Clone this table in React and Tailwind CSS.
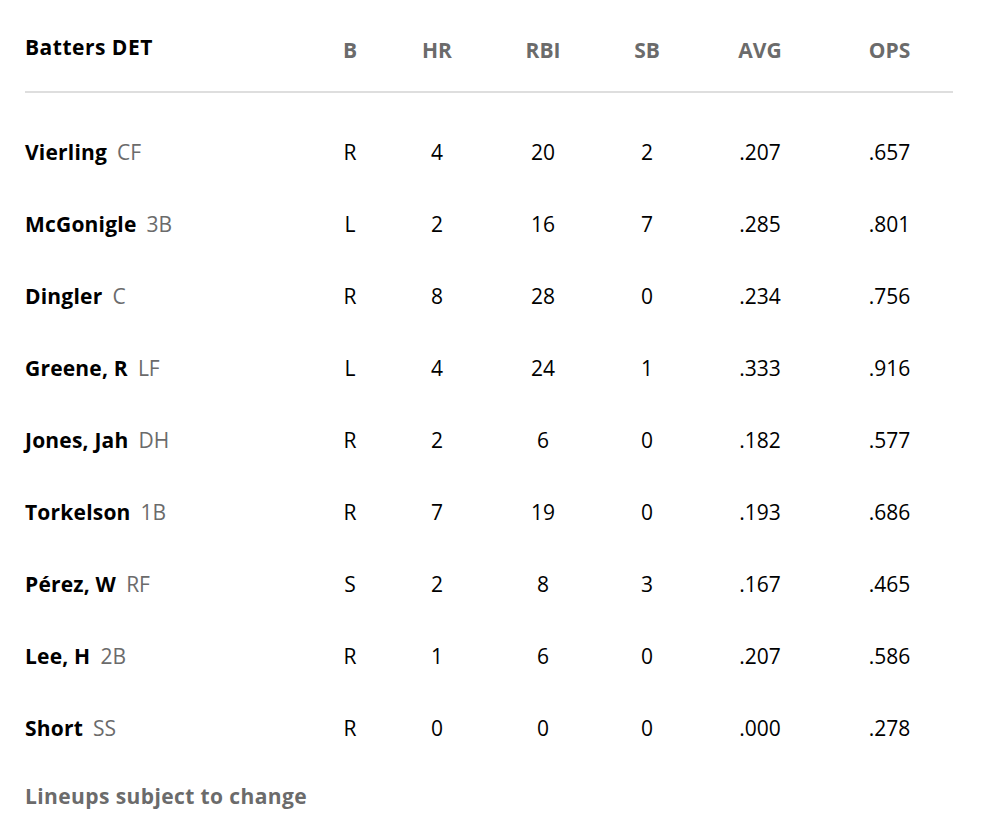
const batters = [
  { name: "Vierling", pos: "CF", b: "R", hr: 4, rbi: 20, sb: 2, avg: ".207", ops: ".657" },
  { name: "McGonigle", pos: "3B", b: "L", hr: 2, rbi: 16, sb: 7, avg: ".285", ops: ".801" },
  { name: "Dingler", pos: "C", b: "R", hr: 8, rbi: 28, sb: 0, avg: ".234", ops: ".756" },
  { name: "Greene, R", pos: "LF", b: "L", hr: 4, rbi: 24, sb: 1, avg: ".333", ops: ".916" },
  { name: "Jones, Jah", pos: "DH", b: "R", hr: 2, rbi: 6, sb: 0, avg: ".182", ops: ".577" },
  { name: "Torkelson", pos: "1B", b: "R", hr: 7, rbi: 19, sb: 0, avg: ".193", ops: ".686" },
  { name: "Pérez, W", pos: "RF", b: "S", hr: 2, rbi: 8, sb: 3, avg: ".167", ops: ".465" },
  { name: "Lee, H", pos: "2B", b: "R", hr: 1, rbi: 6, sb: 0, avg: ".207", ops: ".586" },
  { name: "Short", pos: "SS", b: "R", hr: 0, rbi: 0, sb: 0, avg: ".000", ops: ".278" },
];

const cols = "grid grid-cols-[285px_80px_94px_118px_90px_136px_123px]";

export default function App() {
  return (
    <div className="min-h-screen bg-white px-[25px] font-['Open_Sans','Liberation_Sans',sans-serif] text-[21px]">
      <div className="w-[928px]">
        <div className={`${cols} h-[93px] items-center border-b-2 border-[#dedede] pt-[10px]`}>
          <div className="font-bold tracking-[0.5px] text-black -mt-[6px]">Batters DET</div>
          {["B", "HR", "RBI", "SB", "AVG", "OPS"].map((h) => (
            <div key={h} className="text-center font-bold text-[#6b6b6b]">
              {h}
            </div>
          ))}
        </div>
        <div className="pt-[24px]">
          {batters.map((p) => (
            <div key={p.name} className={`${cols} h-[72px] items-center text-black`}>
              <div>
                <span className="font-bold tracking-[0.2px]">{p.name}</span>
                <span className="ml-[10px] text-[#6b6b6b]">{p.pos}</span>
              </div>
              <div className="text-center">{p.b}</div>
              <div className="text-center">{p.hr}</div>
              <div className="text-center">{p.rbi}</div>
              <div className="text-center">{p.sb}</div>
              <div className="text-center">{p.avg}</div>
              <div className="text-center">{p.ops}</div>
            </div>
          ))}
        </div>
        <div className="mt-[16px] font-bold tracking-[0.4px] text-[#6b6b6b]">Lineups subject to change</div>
      </div>
    </div>
  );
}
